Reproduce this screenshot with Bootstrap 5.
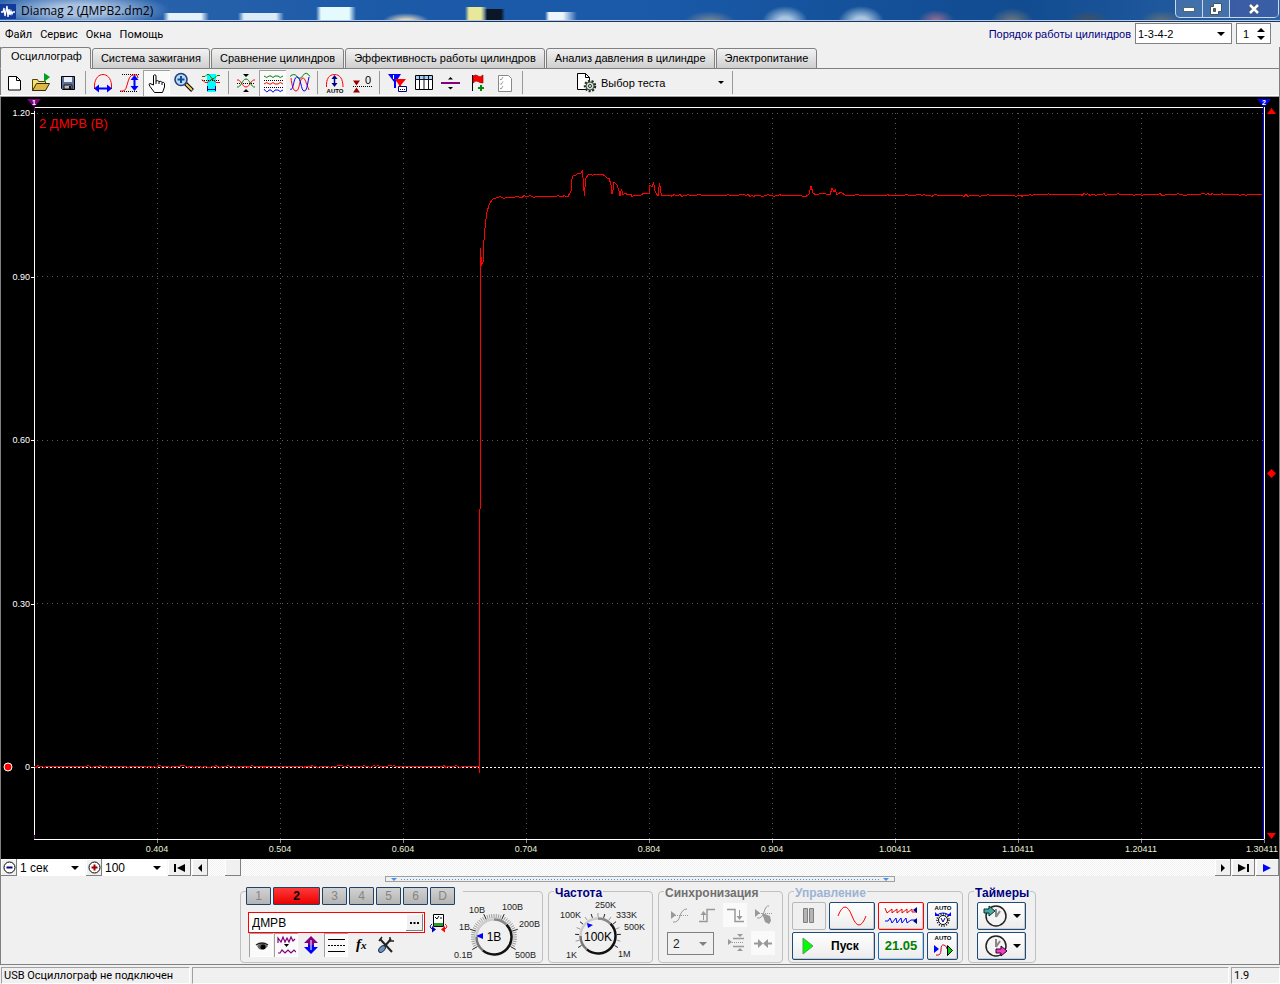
<!DOCTYPE html>
<html lang="ru">
<head>
<meta charset="utf-8">
<meta name="viewport" content="width=device-width, initial-scale=1">
<title>Diamag 2 (ДМРВ2.dm2)</title>
<link href="https://cdn.jsdelivr.net/npm/bootstrap@5.3.0/dist/css/bootstrap.min.css" rel="stylesheet">
<style>
  :root { --face: #f0f0f0; --edge: #808080; --ui: "Liberation Sans", Arial, sans-serif; }
  body { font: 12px/14px var(--ui); color: #000; background: var(--face); min-width: 1060px; }
  button, input, select { font: inherit; color: inherit; border-radius: 0; }
  button { padding: 0; border: 0; background: none; }
  svg { display: block; flex: none; }
  .tahoma { font-family: Roboto, sans-serif; font-size: 11px; }

  .titlebar { height: 22px; border-bottom: 1px solid #1c355e; box-shadow: inset 0 -1px #b4cbe6; overflow: hidden;
    background:
      radial-gradient(ellipse 90px 18px at 80px 10px, #a9c2e2 30%, #a9c2e200),
      linear-gradient(90deg, #e6f2fb00, #e6f2fb 6px 38px, #e6f2fb00) 163px 13px / 46px 10px no-repeat,
      linear-gradient(90deg, #dcebf800, #dcebf8 6px 38px, #dcebf800) 238px 13px / 46px 10px no-repeat,
      linear-gradient(90deg, #e4fafd00, #e4fafd 5px 33px, #e4fafd00) 316px 7px / 40px 16px no-repeat,
      radial-gradient(ellipse 24px 9px at 406px 22px, #dcd3c0 30%, #dcd3c000),
      linear-gradient(90deg, #e9e79a00, #e9e79a 4px 16px, #e9e79a00) 465px 7px / 22px 16px no-repeat,
      linear-gradient(90deg, #0b172600, #0b1726 4px 18px, #0b172600) 483px 9px / 22px 14px no-repeat,
      linear-gradient(90deg, #eef5fc00, #eef5fc 4px 18px, #eef5fc00) 545px 12px / 32px 10px no-repeat,
      radial-gradient(ellipse 26px 11px at 710px 22px, #6f8294 20%, #6f829400),
      radial-gradient(ellipse 23px 16px at 785px 22px, #a9c6df 30%, #a9c6df00),
      radial-gradient(ellipse 23px 16px at 861px 22px, #a9c6df 30%, #a9c6df00),
      radial-gradient(ellipse 18px 10px at 936px 20px, #8a6a90 10%, #8a6a9000),
      radial-gradient(ellipse 22px 14px at 1012px 22px, #64717f 20%, #64717f00),
      radial-gradient(ellipse 22px 12px at 1088px 22px, #3f5165 20%, #3f516500),
      radial-gradient(ellipse 22px 12px at 1162px 22px, #5a6c7e 20%, #5a6c7e00),
      linear-gradient(90deg, #2f66ac, #1c5aa8 30%, #1a5aa9 50%, #114b90 80%, #2a62a6); }
  .titlebar .caption { font: 12px/22px "Open Sans", sans-serif; }
  .winctl { height: 18px; margin-right: 1px; border: 1px solid #c9d9ec; border-top: 0; border-radius: 0 0 5px 5px; background: #5f86b680; }
  .winctl button { width: 27px; display: grid; place-items: center; border-right: 1px solid #c9d9ec; }
  .winctl button:last-child { width: 48px; border: 0; background: #2d3f9a66; }

  .menubar { height: 25px; gap: 8px; padding: 1px 9px 0 5px; }
  .menubar a { color: #000; text-decoration: none; }
  .order { font-family: var(--ui); gap: 4px; }
  .order label { color: #000080; }
  .order select { width: 97px; }
  .spin { width: 35px; }
  .spin input { width: 20px; border: 0; padding: 0 0 0 6px; background: none; }
  .field { background-color: #fff; border: 1px solid var(--edge); height: 21px; }
  .drop { appearance: none; border: 0; padding: 0 2px; background: #fff no-repeat right 6px center;
    background-image: url("data:image/svg+xml,%3Csvg xmlns='http://www.w3.org/2000/svg' width='8' height='4'%3E%3Cpath d='M0 0h8L4 4z'/%3E%3C/svg%3E"); }
  .drop.field { border: 1px solid var(--edge); }
  .drop:disabled { opacity: 1; color: #222; background-color: var(--face);
    background-image: url("data:image/svg+xml,%3Csvg xmlns='http://www.w3.org/2000/svg' width='8' height='4'%3E%3Cpath fill='%23808080' d='M0 0h8L4 4z'/%3E%3C/svg%3E"); }

  .frame { border: 1px solid var(--edge); border-top: 0; min-height: 0; }
  .modes { border: 0; gap: 1px; height: 22px; margin: 0 -1px; align-items: flex-end; box-shadow: inset 0 -1px var(--edge); }
  .modes .nav-link { font-size: 11px; color: #000; border: 1px solid var(--edge); border-radius: 3px 3px 0 0; margin: 0; height: 21px; padding: 0 8px 2px;
    line-height: 16px; background: linear-gradient(#f2f2f2, #cfcfcf); }
  .modes .nav-link.active { color: #000; height: 22px; padding: 0 8px 4px 10px; background: var(--face); border-color: var(--edge) var(--edge) var(--face); }

  .tools { height: 28px; margin-left: -1px; border-bottom: 1px solid #a0a0a0; box-shadow: inset 0 -1px #fff; }
  .tools .tool { width: 27px; height: 26px; display: grid; place-items: center; }
  .testpick { width: 152px; height: 26px; padding: 0 4px 0 0; margin-left: 50px; gap: 3px; font-size: 11px; }
  .vsep { width: 8px; align-self: stretch; margin: 2px 0; background: linear-gradient(#999, #999) center / 1px 100% no-repeat; }
  .sunk { background: #fafafa; box-shadow: inset 1px 1px #a0a0a0, inset -1px -1px #fff; }

  .scope { background: #000; display: grid; grid-template: 10px minmax(0, 1fr) 20px / 33px minmax(0, 1fr) 15px; overflow: hidden; min-height: 400px; }
  .scope .area { grid-area: 2 / 2; position: relative; }
  .scope .area > svg { width: 100%; height: 100%; overflow: visible; }
  .scope .signal { position: absolute; left: 5px; top: 9px; font-size: 13px; line-height: 16px; color: #f00; }
  .yaxis { grid-area: 2 / 1; display: flex; flex-direction: column; justify-content: space-between; position: relative; margin-bottom: 66px; }
  .yaxis span, .xaxis span { color: #fff; font-size: 9px; line-height: 12px; }
  .yaxis span { text-align: right; padding-right: 4px; background: linear-gradient(#fff, #fff) right 0 top 6px / 3px 1px no-repeat; }
  .yaxis svg { position: absolute; left: 2px; bottom: 1px; }
  .xaxis { grid-area: 3 / 2; display: flex; margin: 0 -5% 0 5%; }
  .xaxis span { flex: none; width: 10%; text-align: center; padding-top: 4px; color: #e6f0d8; background: linear-gradient(#888, #888) center top / 1px 4px no-repeat; }
  .xaxis span:last-child { padding-right: 4px; }
  .marks { grid-area: 2 / 3; display: flex; flex-direction: column; justify-content: space-between; align-items: center; }
  .flagrow { grid-area: 1 / 2; display: flex; justify-content: space-between; align-items: flex-end; margin: 0 -7px; }

  .transport { height: 17px; background: #f8f8f8; gap: 1px; }
  .raised { min-width: 0; background: var(--face); box-shadow: inset -1px -1px #808080, inset 1px 1px #fff; display: grid; place-items: center; }
  .raised svg { overflow: visible; }
  .transport .raised, .transport .drop { height: 17px; }
  .w-sec { width: 67px; } .w-pct { width: 64px; } .w16 { width: 16px; } .w23 { width: 23px; }
  .track { background: repeating-conic-gradient(#fff 0 25%, #f1f1f1 0 50%) 0 0 / 2px 2px; }

  .grip { width: 510px; height: 6px; border: 1px solid #a0a0a0; display: flex; align-items: center; justify-content: space-between; padding: 0 5px; }
  .grip i { flex: 1; margin: 0 4px; height: 1px; background: repeating-linear-gradient(90deg, #3a94f0 0 1px, transparent 1px 3px); }

  .panel { padding: 9px 4px 1px 0; gap: 5px; }
  .group { position: relative; border: 1px solid #c0c0c0; border-radius: 4px; height: 72px; min-width: 0; }
  .group > legend { position: absolute; top: -6px; left: 5px; width: auto; margin: 0; padding: 0 1px; float: none;
    font: bold 12px/14px var(--ui); color: #000080; background: var(--face); }
  .group > .off { color: #707070; } .group > .pale { color: #9db4d3; }
  .g-chan { width: 303px; } .g-freq { width: 105px; } .g-sync { width: 125px; } .g-ctrl { width: 175px; } .g-time { width: 68px; }
  .chan { display: flex; gap: 2px; position: absolute; top: -5px; left: 5px; padding-right: 8px; background: var(--face); }
  .chan button { width: 25px; height: 18px; border: 1px solid #1d4468; border-radius: 1px; background: linear-gradient(#d2d2d2, #b4b4b4); color: #858585; }
  .chan .on { width: 47px; background: linear-gradient(#ff3a3a, #ea0000); color: #000; font-weight: bold; }
  .chanbody { padding: 20px 0 0 7px; }
  .minis { padding: 0 0 0 1px; gap: 1px; }
  .sensor { border: 1px solid #f00; background: #fff; width: 177px; height: 21px; padding: 1px; }
  .sensor input { border: 0; padding: 0 2px; width: 156px; outline: 0; }
  .sensor .raised { width: 17px; height: 17px; }
  .mini { width: 24px; height: 24px; display: grid; place-items: center; }
  .dial text { font-family: var(--ui); font-size: 9px; fill: #222; }
  .dial .big { font-size: 12px; fill: #000; text-anchor: middle; }
  .syncgrid { display: grid; grid-template-columns: repeat(4, 24px); gap: 4px; padding: 11px 0 0 8px; }
  .syncgrid .drop { width: 47px; height: 23px; grid-column: span 2; padding-left: 5px; margin-top: 1px; }
  .sunklite { background: #fafafa; }
  .push { border: 1px solid #1d4a78; border-radius: 2px; height: 28px; background: linear-gradient(#fff, #ececec); display: flex; align-items: center; justify-content: center; box-shadow: inset -1px -1px #c9c9c9; }
  .push:disabled { border-color: #b8b8b8; background: var(--face); box-shadow: none; }
  .ctrlgrid { display: grid; grid-template-columns: 34px 46px 46px 31px; gap: 2px 3px; padding: 10px 3px 0; }
  .ctrlgrid .wide { grid-column: span 2; font-weight: bold; justify-content: flex-start; gap: 17px; padding-left: 9px; }
  .ctrlgrid .red { border-color: #f00; }
  .ctrlgrid .time { color: #008000; font-weight: bold; font-size: 13px; border-color: #1d6ab0; }
  .timers { gap: 2px; padding: 10px 9px 0 8px; }
  .timers .push { gap: 5px; }

  .status { height: 19px; gap: 2px; padding: 2px 0 0 1px; }
  .status span { border: 1px solid; border-color: #a0a0a0 #fff #fff #a0a0a0; padding: 0 2px; line-height: 15px; }
  .status span:first-child { width: 189px; } .status span:last-child { width: 49px; }
</style>
</head>
<body class="vh-100 d-flex flex-column overflow-hidden">

<header class="titlebar d-flex flex-shrink-0">
  <svg class="mt-1 me-1" width="17" height="16" viewBox="0 0 17 16"><rect width="16" height="15" fill="#123a9c"/><path d="M1 8h2l1-4 1 8 2-10 1 11 1-8 1 6 1-4 1 3 1-2h2" fill="none" stroke="#fff" stroke-width="1.3"/></svg>
  <span class="caption">Diamag 2 (ДМРВ2.dm2)</span>
  <div class="winctl d-flex ms-auto">
    <button type="button" aria-label="Свернуть"><svg width="12" height="6"><rect x=".5" y="1.5" width="11" height="4" fill="#fff" stroke="#566"/></svg></button>
    <button type="button" aria-label="Развернуть"><svg width="12" height="12"><path d="M3.5.5h8v8h-3v3h-8v-8h3z" fill="#fff" stroke="#455"/><path d="M3.5 5.5h2v3h-2z" fill="#47669a" stroke="#455"/></svg></button>
    <button type="button" aria-label="Закрыть"><svg width="12" height="10" viewBox="0 0 12 10"><path d="M2 1l8 8M10 1l-8 8" stroke="#455" stroke-width="4"/><path d="M2 1l8 8M10 1l-8 8" stroke="#fff" stroke-width="2.5"/></svg></button>
  </div>
</header>

<nav class="menubar tahoma d-flex align-items-center flex-shrink-0">
  <a href="#">Файл</a><a href="#">Сервис</a><a href="#">Окна</a><a href="#">Помощь</a>
  <div class="order d-flex align-items-center align-self-start ms-auto">
    <label for="order">Порядок работы цилиндров</label>
    <select id="order" class="drop field"><option>1-3-4-2</option></select>
    <div class="field d-flex align-items-center spin">
      <input aria-label="Цилиндр" value="1">
      <div class="d-flex flex-column gap-1">
        <button type="button" aria-label="Больше"><svg width="8" height="4"><path d="M0 4h8L4 0z"/></svg></button>
        <button type="button" aria-label="Меньше"><svg width="8" height="4"><path d="M0 0h8L4 4z"/></svg></button>
      </div>
    </div>
  </div>
</nav>

<main class="frame d-flex flex-column flex-fill">
  <ul class="nav nav-tabs modes flex-shrink-0">
    <li><button type="button" class="nav-link active">Осциллограф</button></li>
    <li><button type="button" class="nav-link">Система зажигания</button></li>
    <li><button type="button" class="nav-link">Сравнение цилиндров</button></li>
    <li><button type="button" class="nav-link">Эффективность работы цилиндров</button></li>
    <li><button type="button" class="nav-link">Анализ давления в цилиндре</button></li>
    <li><button type="button" class="nav-link">Электропитание</button></li>
  </ul>

  <div class="tools d-flex align-items-center flex-shrink-0">
    <button class="tool" aria-label="Новый"><svg width="24" height="24"><path d="M6.5 5.5h8l4 4v9.500h-12z" fill="#fff" stroke="#000"/><path d="M14.5 5.5v4h4" fill="none" stroke="#000"/></svg></button>
    <button class="tool" aria-label="Открыть"><svg width="24" height="24"><path d="M3.5 19.5v-11h5l1 2h7v9z" fill="#f6e07a" stroke="#554400"/><path d="M3.5 19.5l4-7h13l-4 7z" fill="#dcb84a" stroke="#332a00"/><path d="M15 2l6 4-6 5z" fill="#00a020"/></svg></button>
    <button class="tool" aria-label="Сохранить"><svg width="24" height="24"><path d="M5.5 5.5h13v13h-12l-1-1z" fill="#5a6f9e" stroke="#000"/><path d="M8 6h8v5H8z" fill="#e8eefa"/><path d="M8 14h8v4H8z" fill="#bbb" stroke="#111"/><path d="M13 15h2v3h-2z" fill="#111"/></svg></button>
    <span class="vsep"></span>
    <button class="tool" aria-label="Период"><svg width="24" height="24"><path d="M3.5 18v-4C4 7 8 3.5 12 3.5S20 7 20.5 14v4" fill="none" stroke="#f00"/><path d="M5 17.5h14" stroke="#00f" stroke-width="2"/><path d="M3 17.5l5-4v8zM21 17.5l-5-4v8z" fill="#00f"/></svg></button>
    <button class="tool" aria-label="Амплитуда"><svg width="24" height="24"><path d="M2 20.5h18M4 3.500h18" stroke="#000" stroke-dasharray="1 1"/><path d="M2 20h3c5 0 4-16 10-16h4l1 3" fill="none" stroke="#f00"/><path d="M16.5 6v12" stroke="#00f" stroke-width="2"/><path d="M16.5 4l4 5h-8zM16.5 20l4-5h-8z" fill="#00f"/></svg></button>
    <button class="tool sunk" aria-label="Рука"><svg width="24" height="24"><path d="M8.5 14V4.5q1.500-1.500 2.500 0V10q2-1 3 .5 2-.6 3 .8 2-.4 2.500 1.200V16l-2 5.500h-8L5 15.500q-2-3 0-3z" fill="#fff" stroke="#000"/><path d="M11 10v3M14 11v2M17 12v2" stroke="#000"/></svg></button>
    <button class="tool" aria-label="Лупа"><svg width="24" height="24"><path d="M13.500 12.500l7 7" stroke="#000" stroke-width="4"/><path d="M14 13l6 6" stroke="#f2cf5a" stroke-width="2"/><circle cx="9" cy="8.500" r="6" fill="#b8dcf6" stroke="#26407e" stroke-width="1.600"/><path d="M9 5v7M5.500 8.500h7" stroke="#124a9a" stroke-width="2"/></svg></button>
    <button class="tool" aria-label="Фрагмент"><svg width="24" height="24"><path d="M8 3h9v18H8z" fill="#0ff"/><path d="M3 9.500h18" stroke="#000" stroke-dasharray="1 1"/><path d="M3 5.500h3l2-2h2l3 4h2l3-3h3" fill="none" stroke="#008000"/><path d="M3 8.500l3 3h3l3-3h2l3 3h4" fill="none" stroke="#f00"/><path d="M8.500 15v5M16.500 15v5M9 18.500h7" stroke="#008" /></svg></button>
    <span class="vsep"></span>
    <button class="tool" aria-label="Совместить"><svg width="24" height="24"><path d="M9 3h6l-3 3zM9 21h6l-3-3z"/><path d="M3 12.500h18" stroke="#000" stroke-dasharray="1 1"/><path d="M3 9c4-1 5 7 9 7s5-8 9-7" fill="none" stroke="#f00"/><path d="M3 16c4 1 5-8 9-8s5 9 9 8" fill="none" stroke="#008000"/></svg></button>
    <button class="tool sunk" aria-label="Разнести"><svg width="24" height="24"><g fill="none"><path d="M3 9.500h19M3 16.500h19" stroke="#000" stroke-dasharray="1 1"/><path d="M3 5q3 3 5 0h2q2 3 4 0h3q2 3 5 0" stroke="#008000"/><path d="M3 13q3-3 5 0h2q2-3 4 0h3q2-3 5 0" stroke="#f00"/><path d="M3 18q3 5 5 1h2q2 4 4 0h3q2 3 5 0" stroke="#00f"/></g></svg></button>
    <button class="tool" aria-label="Наложить"><svg width="24" height="24"><g fill="none"><path d="M2 5.500q4-4 7 0t6-1 7 1" stroke="#008000"/><path d="M3 7c1 7 2 13 5 13 4 0 3-13 7-13 2 0 3 5 6 12" stroke="#f00"/><path d="M2 18c4 3 3-12 7-12 4 0 4 14 7 14 3 0 3-5 5-14" stroke="#00f"/></g></svg></button>
    <span class="vsep"></span>
    <button class="tool" aria-label="Автомасштаб"><svg width="24" height="24"><path d="M3.500 16C3 8 6 3.500 11.500 3.500S20 8 20 16" fill="none" stroke="#f00"/><path d="M11.500 6v8" stroke="#008" stroke-width="1.500"/><path d="M11.500 4l3 4h-6zM11.500 16l3-4h-6z" fill="#008"/><text x="12" y="22" font-size="6" font-weight="bold" text-anchor="middle">AUTO</text></svg></button>
    <button class="tool" aria-label="Ноль"><svg width="24" height="24"><path d="M3 9.500h7l-3.500 5zM3 21.500h7l-3.500-5z" fill="#900"/><path d="M3 15.500h19" stroke="#000" stroke-dasharray="1 1"/><text x="15" y="13" font-size="11">0</text></svg></button>
    <span class="vsep"></span>
    <button class="tool" aria-label="Фильтр"><svg width="24" height="24"><path d="M3 3h13l-5 8v6H9v-6z" fill="#00f"/><path d="M10 8h11l-5 6v5h-2v-5z" fill="#f00"/><path d="M8.500 4v4M8 5h1" stroke="#fff"/><path d="M13.500 15.500h8v5h-8z" fill="#fff" stroke="#008"/><path d="M15 18.500h5" stroke="#000" stroke-dasharray="1 1"/></svg></button>
    <button class="tool" aria-label="Таблица"><svg width="24" height="24"><path d="M3.500 4.500h17v14h-17z" fill="#fff" stroke="#000"/><path d="M4 5h16v3H4z" fill="#a8cdf0"/><path d="M3 8.500h18M7.500 5v14M12 5v14M16.500 5v14" stroke="#112"/></svg></button>
    <button class="tool" aria-label="Линейка"><svg width="24" height="24"><path d="M2 12h19" stroke="#800080" stroke-width="2"/><path d="M9 8.500h5L11.500 6zM9 16h5l-2.500 2.500z"/></svg></button>
    <button class="tool" aria-label="Метка"><svg width="24" height="24"><path d="M6.500 4v16" stroke="#000"/><path d="M7 5q3-2 5 0t5-1v8q-3 0-5-1.500T7 12z" fill="#f00" stroke="#700" stroke-width=".6"/><path d="M15 14v6M12 17h6" stroke="#008a10" stroke-width="2"/></svg></button>
    <button class="tool" aria-label="Отчёт"><svg width="24" height="24"><path d="M5.500 4.500h10l3 3v13h-13z" fill="#fff" stroke="#888"/><path d="M7 8l1 1 2-3M7 12.500l1 1 2-3M7 17l1 1 2-3" fill="none" stroke="#999"/></svg></button>
    <span class="vsep"></span>
    <button class="testpick d-flex align-items-center" type="button">
      <svg width="22" height="22"><path d="M1.500 1.500h8l4 4v12h-12z" fill="#fff" stroke="#000"/><path d="M9.500 1.500v4h4" fill="none" stroke="#000"/><circle cx="14" cy="14" r="5" fill="#cfdccf" stroke="#243024" stroke-width="2.500" stroke-dasharray="2 1.500"/><circle cx="14" cy="14" r="4" fill="#cfdccf" stroke="#243024" stroke-width=".8"/><circle cx="14" cy="14" r="1.500" fill="#fff" stroke="#243024"/></svg>
      <span>Выбор теста</span>
      <svg class="ms-auto" width="6" height="3"><path d="M0 0h6L3 3z"/></svg>
    </button>
    <span class="vsep"></span>
  </div>

  <section class="scope flex-fill" aria-label="Осциллограмма">
    <div class="flagrow">
      <svg width="14" height="9"><path d="M0 1h14L7 9z" fill="#800080"/><text x="7" y="7" font-size="7" font-weight="bold" fill="#fff" text-anchor="middle">1</text></svg>
      <svg width="14" height="9"><path d="M0 1h14L7 9z" fill="#00f"/><text x="7" y="7" font-size="7" font-weight="bold" fill="#fff" text-anchor="middle">2</text></svg>
    </div>
    <div class="yaxis">
      <span>1.20</span><span>0.90</span><span>0.60</span><span>0.30</span><span>0</span>
      <svg width="10" height="10"><circle cx="5" cy="5" r="4" fill="#f00" stroke="#fff"/></svg>
    </div>
    <div class="area">
      <svg id="plot" viewBox="0 0 1230 732" preserveAspectRatio="none" fill="none" shape-rendering="crispEdges">
        <g id="grid" stroke="#5a5a5a" stroke-dasharray="1 4"></g>
        <path d="M0 660.500H1230" stroke="#fff" stroke-dasharray="2 2"/>
        <path d="M.5 732V.5H1230M0 732.500H1230M1230.500 0V732" stroke="#fff"/>
        <path d="M1229.500 0V732" stroke="#00f"/>
        <path d="M.5 0v4M.5 728v4" stroke="#800080"/>
        <path id="trace" stroke="#f00" vector-effect="non-scaling-stroke"/>
      </svg>
      <span class="signal">2 ДМРВ (В)</span>
    </div>
    <div class="marks">
      <svg width="9" height="7"><path d="M0 7h9L4.500 1z" fill="#f00"/></svg>
      <svg width="9" height="9"><path d="M4.500 0L9 4.500 4.500 9 0 4.500z" fill="#f00"/></svg>
      <svg width="9" height="6"><path d="M0 0h9L4.500 6z" fill="#f00"/></svg>
    </div>
    <div class="xaxis">
      <span>0.404</span><span>0.504</span><span>0.604</span><span>0.704</span><span>0.804</span><span>0.904</span><span>1.00411</span><span>1.10411</span><span>1.20411</span><span>1.30411</span>
    </div>
  </section>

  <div class="transport d-flex flex-shrink-0">
    <button class="raised w16" aria-label="Уменьшить"><svg width="13" height="13"><circle cx="6.500" cy="6.500" r="5.500" fill="#fff" stroke="#000"/><path d="M3.500 6.500h6" stroke="#000080" stroke-width="2"/></svg></button>
    <select class="drop w-sec" aria-label="Развёртка"><option>1 сек</option></select>
    <button class="raised w16" aria-label="Увеличить"><svg width="13" height="13"><circle cx="6.500" cy="6.500" r="5.500" fill="#fff" stroke="#000"/><path d="M3.500 6.500h6M6.500 3.500v6" stroke="#900" stroke-width="2"/></svg></button>
    <select class="drop w-pct" aria-label="Масштаб"><option>100</option></select>
    <button class="raised w23" aria-label="В начало"><svg width="11" height="8"><path d="M0 0h2v8H0zM11 0v8L3 4z"/></svg></button>
    <button class="raised w16" aria-label="Назад"><svg width="4" height="8"><path d="M4 0v8L0 4z"/></svg></button>
    <div class="track flex-fill ps-3"><button class="raised w16" aria-label="Ползунок"></button></div>
    <button class="raised w16" aria-label="Вперёд"><svg width="4" height="8"><path d="M0 0v8l4-4z"/></svg></button>
    <button class="raised w23" aria-label="В конец"><svg width="11" height="8"><path d="M9 0h2v8H9zM0 0v8l8-4z"/></svg></button>
    <button class="raised w23" aria-label="Воспроизвести"><svg width="9" height="8"><path d="M0 0v8l8-4z" fill="#00f"/></svg></button>
  </div>
  <div class="grip mx-auto flex-shrink-0">
    <svg width="6" height="3"><path d="M0 0h6L3 3z" fill="#3a94f0"/></svg><i></i><svg width="6" height="3"><path d="M0 0h6L3 3z" fill="#3a94f0"/></svg>
  </div>

  <div class="panel d-flex justify-content-center flex-shrink-0">
    <fieldset class="group g-chan d-flex">
      <div class="chan">
        <button>1</button><button class="on">2</button><button>3</button><button>4</button><button>5</button><button>6</button><button>D</button>
      </div>
      <div class="chanbody">
        <div class="d-flex align-items-center gap-1">
          <div class="sensor d-flex"><input aria-label="Датчик" value="ДМРВ"><button class="raised" aria-label="Выбрать"><svg width="9" height="2"><path d="M0 1h9" stroke="#000" stroke-width="2" stroke-dasharray="2 1.500"/></svg></button></div>
          <button aria-label="Инверсия"><svg width="19" height="20"><path d="M4.500 1.500h10v12h-10z" fill="#fff" stroke="#000"/><path d="M5 10h9v3H5z" fill="#28a028"/><path d="M6 4l2 2 2-3M11 5h2" stroke="#000" fill="none"/><path d="M3 11q-4 3 1 5.500" fill="none" stroke="#00a"/><path d="M16 11q4 3-1 5.500" fill="none" stroke="#f00"/><path d="M3 13l4 3.500-4 3z" fill="#00a"/><path d="M16 13l-4 3.500 4 3z" fill="#f00"/></svg></button>
        </div>
        <div class="d-flex minis">
          <button class="mini sunk" aria-label="Показать"><svg width="20" height="20"><path d="M6 11q5-5 9-1l2 1q-4 5-9 3z" fill="#666"/><circle cx="12" cy="12" r="2.500"/><path d="M5 10q6-4 12 0" fill="none" stroke="#222" stroke-width="1.500"/></svg></button>
          <button class="mini sunk" aria-label="Сглаживание"><svg width="20" height="20"><path d="M2 8V3l3 4 2-5 2 5 2-4 2 4 2-5 2 4 2-2M2 18h2l2-3 3 3 3-3 3 3 3-3 2 2" fill="none" stroke="#800080" stroke-width="1.200"/><path d="M8 9h5l-2.500 3z"/></svg></button>
          <button class="mini" aria-label="Сдвиг"><svg width="20" height="20"><path d="M10 1l7 7h-4v2H7V8H3z" fill="#800080"/><path d="M10 19l7-7h-4v-2H7v2H3z" fill="#00f"/><path d="M10 5v10" stroke="#fff"/></svg></button>
          <button class="mini sunk" aria-label="Линии"><svg width="20" height="20"><path d="M2 4.500h17M2 16.500h17" stroke="#000"/><path d="M2 10.500h17" stroke="#000" stroke-dasharray="2 1"/></svg></button>
          <button class="mini" aria-label="Функция"><svg width="20" height="20"><text x="5" y="14" font-family="Liberation Serif" font-style="italic" font-weight="bold" font-size="15">f</text><text x="10" y="14" font-family="Liberation Serif" font-style="italic" font-weight="bold" font-size="11">x</text></svg></button>
          <button class="mini" aria-label="Настройки"><svg width="20" height="20"><path d="M4 4l12 13M8 12l7-8" stroke="#222" stroke-width="2"/><path d="M3 6l3-4M14 2v4h4" stroke="#222" stroke-width="1.500" fill="none"/><ellipse cx="6" cy="14" rx="4" ry="2.500" transform="rotate(-45 6 14)" fill="#6d92c4" stroke="#234"/></svg></button>
        </div>
      </div>
      <svg class="dial ms-auto" width="91" height="70" viewBox="451 892 91 70" data-cx="494" data-cy="937" data-n="41">
        <text x="454" y="958">0.1В</text><text x="459" y="930">1В</text><text x="469" y="913">10В</text><text x="502" y="910">100В</text><text x="519" y="927">200В</text><text x="515" y="958">500В</text>
        <path d="M476 936l7-3v6z" fill="#00f"/><text class="big" x="494" y="941">1В</text>
      </svg>
    </fieldset>

    <fieldset class="group g-freq">
      <legend>Частота</legend>
      <svg class="dial" width="100" height="70" viewBox="549 892 100 70" data-cx="598" data-cy="936" data-n="15">
        <text x="566" y="958">1K</text><text x="560" y="918">100K</text><text x="595" y="908">250K</text><text x="616" y="918">333K</text><text x="624" y="930">500K</text><text x="618" y="957">1M</text>
        <path d="M587 923l6 2-5 3z" fill="#00f"/><text class="big" x="598" y="941">100K</text>
      </svg>
    </fieldset>

    <fieldset class="group g-sync">
      <legend class="off">Синхронизация</legend>
      <div class="syncgrid">
        <button class="mini" aria-label="Уровень" disabled><svg width="20" height="20"><path d="M2 6l5 4-5 4z" fill="#999"/><path d="M2 10.500h17" stroke="#999" stroke-dasharray="1 1"/><path d="M4 17q5 1 7-6t7-7" fill="none" stroke="#999"/></svg></button>
        <button class="mini" aria-label="Фронт" disabled><svg width="20" height="20"><path d="M2 16.500h8v-12h8" fill="none" stroke="#999" stroke-width="1.500"/><path d="M6.500 15V8" stroke="#999"/><path d="M3.500 10h6l-3-4z" fill="#999"/></svg></button>
        <button class="mini sunklite" aria-label="Спад" disabled><svg width="20" height="20"><path d="M2 4.500h8v12h9" fill="none" stroke="#999" stroke-width="1.500"/><path d="M14.500 5v8" stroke="#999"/><path d="M11.500 11h6l-3 4z" fill="#999"/></svg></button>
        <button class="mini" aria-label="Ручная" disabled><svg width="20" height="20"><path d="M2 4l5 4-5 4z" fill="#999"/><path d="M2 8.500h17" stroke="#999" stroke-dasharray="1 1"/><path d="M4 13q5 1 7-6t5-6" fill="none" stroke="#999"/><path d="M9 8l8 3 1 5-2 3-4-2z" fill="#999"/></svg></button>
        <select class="drop field" aria-label="Канал синхронизации" disabled><option>2</option></select>
        <button class="mini" aria-label="Окно" disabled><svg width="20" height="20"><path d="M3 6l4 3-4 3zM12 1h6l-3 3zM12 18h6l-3-3z" fill="#999"/><path d="M3 9.500h15" stroke="#999" stroke-dasharray="1 1"/><path d="M8 5.500h11M8 13.500h11" stroke="#999" stroke-width="1.500"/></svg></button>
        <button class="mini sunklite" aria-label="Сжать" disabled><svg width="20" height="20"><path d="M1 10.500h5M14 10.500h5" stroke="#999" stroke-width="2"/><path d="M5 6l5 4.500L5 15zM15 6l-5 4.500 5 4.500z" fill="#999"/></svg></button>
      </div>
    </fieldset>

    <fieldset class="group g-ctrl">
      <legend class="pale">Управление</legend>
      <div class="ctrlgrid">
        <button class="push" aria-label="Пауза" disabled><svg width="12" height="16"><path d="M.5.5h4v14h-4zM6.500.5h4v14h-4z" fill="#b4b4b4" stroke="#808080"/></svg></button>
        <button class="push" aria-label="Один кадр"><svg width="30" height="20"><path d="M1 10Q8-8 15 10t14 0" fill="none" stroke="#f00"/></svg></button>
        <button class="push red" aria-label="Поток"><svg width="34" height="20"><path d="M1 2l2 5 5-4v4l5-4v4l5-4v4l5-4v4l5-4v3h5" fill="none" stroke="#e00"/><path d="M1 15h3l2-3 2 5 4-5 1 5 4-5 1 5 4-5 1 5 4-3h4" fill="none" stroke="#00f"/><path d="M33 1v6l-4-3zM33 12v6l-4-3z" fill="#008"/></svg></button>
        <button class="push" aria-label="Автонастройка"><svg width="22" height="24"><text x="11" y="6" font-size="6" font-weight="bold" text-anchor="middle">AUTO</text><path d="M5 11q6-4 12 0" fill="none" stroke="#00f"/><path d="M3 8v4h4zM19 8v4h-4z" fill="#00f"/><circle cx="11" cy="16" r="6" fill="none" stroke="#000" stroke-width="1.500" stroke-dasharray="1 1.500"/><circle cx="11" cy="16" r="4.500" fill="#fff" stroke="#000"/><path d="M9 14l2 4 2-4" fill="none" stroke="#008"/></svg></button>
        <button class="push wide" type="button"><svg width="12" height="18"><path d="M1 1v16l10-8z" fill="#0f0" stroke="#5a9a5a"/></svg>Пуск</button>
        <button class="push time" type="button">21.05</button>
        <button class="push" aria-label="Автозапуск"><svg width="22" height="24"><text x="11" y="6" font-size="6" font-weight="bold" text-anchor="middle">AUTO</text><path d="M4 21q5 1 5-5t3-5 3 4" fill="none" stroke="#c03"/><path d="M2 11l5 4-5 4z" fill="#00f"/><path d="M15.500 11.500l5 5-5 5z" fill="#0c0" stroke="#000"/></svg></button>
      </div>
    </fieldset>

    <fieldset class="group g-time">
      <legend>Таймеры</legend>
      <div class="d-grid timers">
        <button class="push" aria-label="Таймер включения"><svg width="26" height="24"><circle cx="14" cy="12" r="10" fill="#f4f4f4" stroke="#222" stroke-width="1.500"/><path d="M14 13V5M14 13l4-6" stroke="#888" stroke-width="2"/><path d="M2 5h5V2l6 5-6 5V9H2z" fill="#4aa8a0" stroke="#033"/></svg><svg width="8" height="4"><path d="M0 0h8L4 4z"/></svg></button>
        <button class="push" aria-label="Таймер выключения"><svg width="26" height="24"><circle cx="14" cy="12" r="10" fill="#f4f4f4" stroke="#222" stroke-width="1.500"/><path d="M14 13V5M14 13l4-6" stroke="#888" stroke-width="2"/><path d="M14 15h5v-3l6 5-6 5v-3h-5z" fill="#f040c0" stroke="#303"/></svg><svg width="8" height="4"><path d="M0 0h8L4 4z"/></svg></button>
      </div>
    </fieldset>
  </div>
</main>

<footer class="status tahoma d-flex flex-shrink-0">
  <span>USB Осциллограф не подключен</span><span class="flex-fill"></span><span>1.9</span>
</footer>

<script src="https://cdn.jsdelivr.net/npm/bootstrap@5.3.0/dist/js/bootstrap.bundle.min.js"></script>
<script>
  const NS = 'http://www.w3.org/2000/svg';
  function add(parent, d, stroke, before) {
    const p = document.createElementNS(NS, 'path');
    p.setAttribute('d', d);
    if (stroke) p.setAttribute('stroke', stroke);
    parent.insertBefore(p, before || null);
    return p;
  }

  // Grid: ten time divisions, four voltage levels above zero
  const grid = document.getElementById('grid');
  for (let i = 1; i < 10; i++) add(grid, `M${i * 123 + 0.5} 6V732`);
  for (const y of [6.5, 169.5, 333.5, 496.5]) add(grid, `M3 ${y}H1230`);

  // Signal: key points joined by level stretches that carry a little noise
  let seed = 7;
  const rnd = () => (seed = (seed * 16807) % 2147483647) / 2147483647;
  let d = 'M0 659.5';
  const flat = (x0, x1, y, amp) => {
    for (let x = x0; x < x1; x += 2) d += `L${x} ${(y + (rnd() < 0.4 ? (rnd() - 0.5) * amp : 0)).toFixed(1)}`;
  };
  const pts = list => list.forEach(([x, y]) => d += `L${x} ${y}`);
  flat(2, 444, 659.5, 3);
  pts([[445.5, 659], [445.5, 666], [445.5, 405], [446.5, 400], [446.5, 141], [447.5, 158], [449, 155], [450, 133], [451.5, 115], [453, 105], [455, 98], [458, 93], [460, 91]]);
  flat(462, 490, 90.5, 3); flat(490, 536, 89.5, 3);
  pts([[537, 84], [537.5, 74], [539, 69], [542, 68], [544, 66], [547, 66], [548.5, 64], [549.5, 78], [550.5, 89], [551.5, 72], [554, 68]]);
  flat(556, 569, 67, 3);
  pts([[571, 69], [573, 71], [575, 71], [577, 78], [578, 87], [579, 83], [580, 75], [583, 78], [585, 84], [586, 89], [587.5, 82], [589, 88], [591, 86], [594, 88], [597, 87]]);
  flat(598, 608, 88.5, 3);
  pts([[610, 86], [613, 87], [615, 86], [616, 78], [618, 80], [619.5, 75], [621, 84], [624, 89], [625.5, 76], [627, 86], [628, 89]]);
  flat(630, 774, 88.5, 3);
  pts([[775, 87], [777, 79], [779, 86], [782, 88], [788, 86], [796, 88], [798, 81], [800, 85], [801.5, 83], [803, 88], [807, 85], [811, 88]]);
  flat(812, 1000, 88.5, 3); flat(1000, 1229, 87.5, 3);
  document.getElementById('trace').setAttribute('d', d);

  // Rotary dials: scale ticks and the shaded rim, swept over 240 degrees
  document.querySelectorAll('.dial').forEach(s => {
    const cx = +s.dataset.cx, cy = +s.dataset.cy, n = +s.dataset.n, first = s.firstElementChild;
    for (let i = 0; i < n; i++) {
      const a = (150 + 240 * i / (n - 1)) * Math.PI / 180, major = i % ((n - 1) / (n > 20 ? 5 : 7)) < 1;
      const at = r => `${(cx + r * Math.cos(a)).toFixed(1)} ${(cy + r * Math.sin(a)).toFixed(1)}`;
      add(s, `M${at(19)}L${at(major && n > 20 ? 25 : 23)}`, major ? '#222' : '#999', first);
    }
    const arc = (a0, a1, color) => {
      const p = t => `${(cx + 17.5 * Math.cos(t * Math.PI / 180)).toFixed(1)} ${(cy + 17.5 * Math.sin(t * Math.PI / 180)).toFixed(1)}`;
      const e = add(s, `M${p(a0)}A17.5 17.5 0 0 1 ${p(a1)}`, color, first);
      e.setAttribute('fill', 'none'); e.setAttribute('stroke-width', '2.5');
    };
    arc(-45, 130, '#111'); arc(-90, -45, '#888'); arc(130, 180, '#777'); arc(180, 270, '#ccc');
  });
</script>
</body>
</html>
